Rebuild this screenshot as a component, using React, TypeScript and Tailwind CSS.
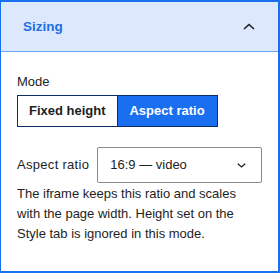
export default function App() {
  return (
    <div className="w-[280px] h-[273px] bg-white border-[#1a6ef0] border-t-2 border-b-2 border-l border-r-2 flex flex-col font-['Liberation_Sans',Arial,sans-serif] text-[13px] text-[#1e1e1e]">
      {/* header */}
      <div className="h-[50px] shrink-0 bg-[#dce8fc] border-b border-[#6ba6f8] flex items-center justify-between pl-[22px] pr-[23px]">
        <span className="font-bold text-[13.5px] text-[#1f6fe6] pt-[2px]">Sizing</span>
        <svg width="12" height="7" viewBox="0 0 12 7" fill="none" className="-mt-[1px]">
          <path d="M1 6 L6 1.5 L11 6" stroke="#1e1e1e" strokeWidth="1.6" />
        </svg>
      </div>

      {/* body */}
      <div className="flex flex-col px-4 pt-[20px]">
        <div className="leading-5">Mode</div>
        <div className="flex mt-[3px]">
          <button className="h-8 px-[11px] border border-[#0c2d66] bg-white font-bold text-[#1e1e1e]">
            Fixed height
          </button>
          <button className="h-8 w-[100px] border border-l-0 border-[#0c2d66] bg-[#1a6ef0] font-bold text-white">
            Aspect ratio
          </button>
        </div>

        <div className="flex items-center gap-2 mt-5">
          <span className="leading-5 tracking-[0.3px]">Aspect ratio</span>
          <div className="flex-1 h-[36px] border border-[#8a8a8a] rounded-[2px] flex items-center justify-between pl-3 pr-[15px]">
            <span>16:9 — video</span>
            <svg width="9" height="5" viewBox="0 0 9 5" fill="none">
              <path d="M0.8 0.8 L4.5 4 L8.2 0.8" stroke="#1e1e1e" strokeWidth="1.3" />
            </svg>
          </div>
        </div>

        <p className="leading-5 mt-[1px]">
          The iframe keeps this ratio and scales with the page width. Height set on the Style tab is ignored in this mode.
        </p>
      </div>
    </div>
  );
}
